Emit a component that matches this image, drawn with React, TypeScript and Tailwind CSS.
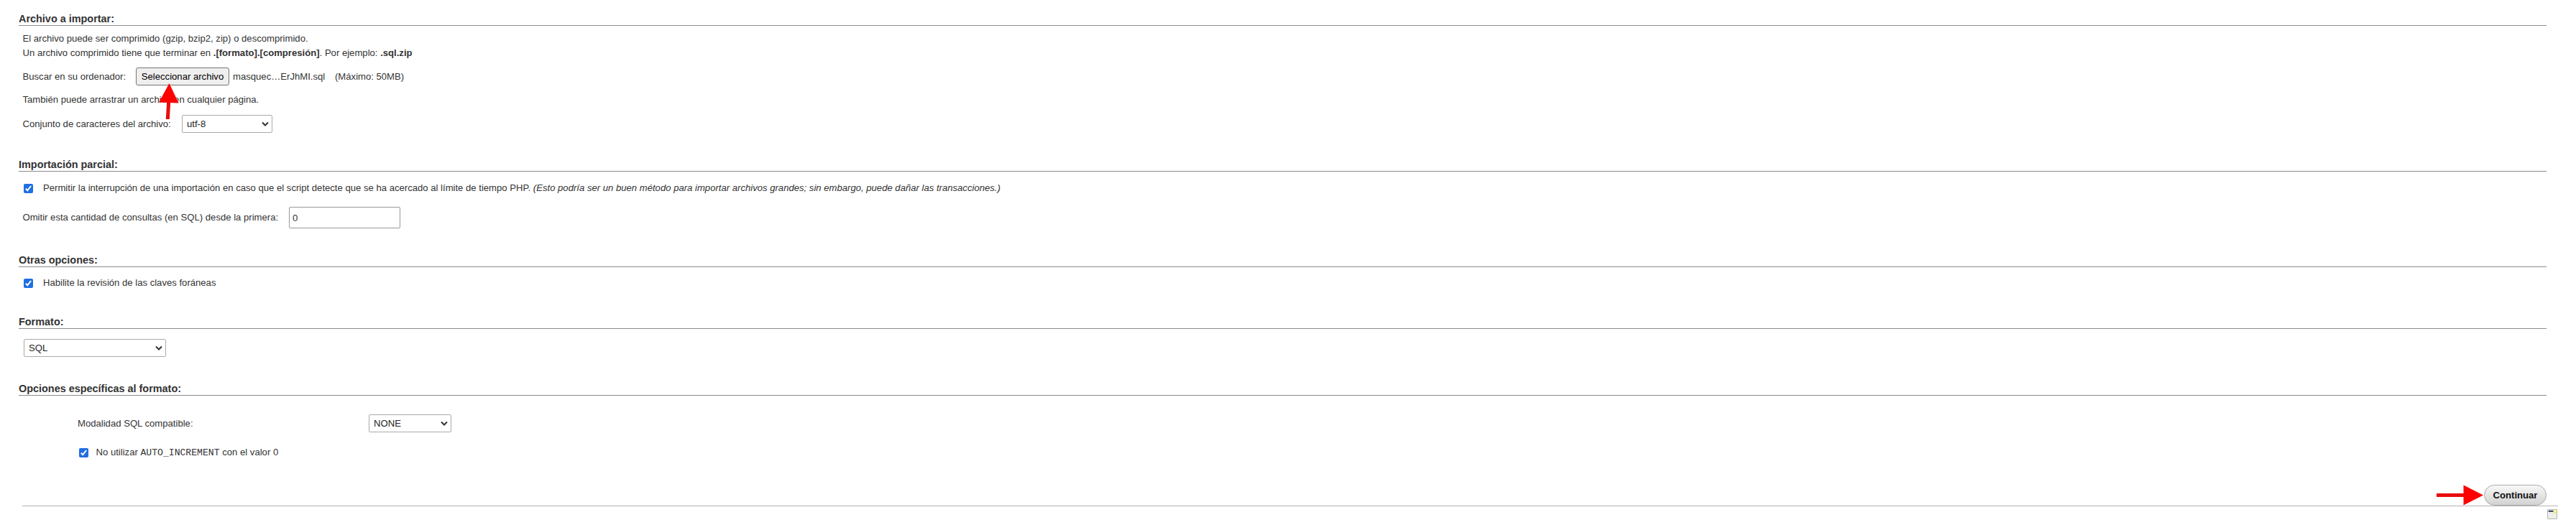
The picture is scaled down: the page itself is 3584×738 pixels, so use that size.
import type { ReactNode } from "react";

function Section({ title, className, children }: { title: string; className: string; children: ReactNode }) {
  return (
    <section className={`ml-[27px] mr-[41px] ${className}`}>
      <h3 className="-ml-px box-content h-[18px] border-b border-[#8c8c8c] text-[14.43px] leading-[18px] font-bold text-[#333]">
        {title}
      </h3>
      {children}
    </section>
  );
}

function Select({ value, className }: { value: string; className: string }) {
  return (
    <button
      type="button"
      className={`flex h-[25px] shrink-0 items-center justify-between rounded-[2px] border border-[#aaa] bg-white pr-[4px] pl-[6px] text-[#222] ${className}`}
    >
      <span>{value}</span>
      <svg width="10" height="8" viewBox="0 0 10 8" fill="none" stroke="#333" strokeWidth="2">
        <path d="M1 1.5 L5 5.5 L9 1.5" />
      </svg>
    </button>
  );
}

function Checkbox() {
  return (
    <span
      role="checkbox"
      aria-checked="true"
      className="mt-px flex size-[13px] shrink-0 items-center justify-center rounded-[2px] bg-[#1f6fe0]"
    >
      <svg width="13" height="13" viewBox="0 0 13 13" fill="none" stroke="#fff" strokeWidth="2">
        <path d="M2.8 6.8 L5.2 9.2 L10.1 3" />
      </svg>
    </span>
  );
}

export default function App() {
  return (
    <main className="relative h-[738px] w-[3584px] overflow-hidden bg-white pt-[17px] font-['Liberation_Sans',Arial,sans-serif] text-[13.12px] leading-[20px] whitespace-nowrap text-[#333]">
      <Section title="Archivo a importar:" className="h-[203px]">
        <div className="pt-[8px] pl-[4.5px]">
          <p>El archivo puede ser comprimido (gzip, bzip2, zip) o descomprimido.</p>
          <p>
            Un archivo comprimido tiene que terminar en <b>.[formato].[compresión]</b>. Por ejemplo: <b>.sql.zip</b>
          </p>
          <div className="mt-[10px] flex h-[25px] items-center">
            <span className="w-[157.5px]">Buscar en su ordenador:</span>
            <button
              type="button"
              className="h-[25px] w-[130px] rounded-[3px] border border-[#767676] bg-[#efefef] text-center leading-[23px] text-black"
            >
              Seleccionar archivo
            </button>
            <span className="ml-[5px] w-[142px]">masquec…ErJhMI.sql</span>
            <span>(Máximo: 50MB)</span>
          </div>
          <p className="mt-[10px]">También puede arrastrar un archivo en cualquier página.</p>
          <div className="mt-[11px] flex h-[25px] items-center">
            <span className="w-[221.5px]">Conjunto de caracteres del archivo:</span>
            <Select value="utf-8" className="w-[126px]" />
          </div>
        </div>
      </Section>

      <Section title="Importación parcial:" className="h-[133px]">
        <div className="mt-[13px] flex h-[20px] items-center gap-[14px] pl-[6px]">
          <Checkbox />
          <span>
            Permitir la interrupción de una importación en caso que el script detecte que se ha acercado al límite de
            tiempo PHP. <i>(Esto podría ser un buen método para importar archivos grandes; sin embargo, puede dañar las transacciones.)</i>
          </span>
        </div>
        <div className="mt-[16px] flex h-[30px] items-center pl-[4.5px]">
          <span className="w-[370.5px]">Omitir esta cantidad de consultas (en SQL) desde la primera:</span>
          <input
            defaultValue="0"
            className="h-[30px] w-[155px] rounded-[2px] border border-[#999] bg-white px-[4px] text-[#333]"
          />
        </div>
      </Section>

      <Section title="Otras opciones:" className="h-[86px]">
        <div className="mt-[12px] flex h-[20px] items-center gap-[14px] pl-[6px]">
          <Checkbox />
          <span>Habilite la revisión de las claves foráneas</span>
        </div>
      </Section>

      <Section title="Formato:" className="h-[93px]">
        <div className="mt-[14px] flex pl-[6px]">
          <Select value="SQL" className="w-[198px]" />
        </div>
      </Section>

      <Section title="Opciones específicas al formato:" className="h-[143px]">
        <div className="mt-[26px] flex h-[25px] items-center pl-[81px]">
          <span className="w-[405px]">Modalidad SQL compatible:</span>
          <Select value="NONE" className="w-[115px]" />
        </div>
        <div className="mt-[18px] flex h-[20px] items-center gap-[10.5px] pl-[83px]">
          <Checkbox />
          <span>
            No utilizar <code className="font-['Liberation_Mono',monospace] text-[13.12px]">AUTO_INCREMENT</code> con el
            valor 0
          </span>
        </div>
      </Section>

      <div className="mr-[41px] flex h-[29px] items-center justify-end">
        <svg width="66" height="29" viewBox="0 0 66 29">
          <path d="M0 12 H38 V17 H0 Z" fill="#e80c0c" />
          <path d="M37.5 0.5 L65 14.5 L37.5 28.5 Z" fill="#fe0000" />
        </svg>
        <button
          type="button"
          className="h-[29px] w-[87px] rounded-full border border-[#aaa] bg-gradient-to-b from-[#f8f8f8] to-[#d2d2d2] text-center leading-[27px] font-bold text-[#111]"
        >
          Continuar
        </button>
      </div>
      <hr className="mr-[25px] ml-[31px] border-[#b4b4b4]" />
      <div className="mt-[4px] mr-[26px] flex justify-end">
        <svg width="14" height="14" viewBox="0 0 14 14">
          <rect x="0.5" y="0.5" width="13" height="13" rx="0.5" fill="#eeeeec" stroke="#b5b5b0" />
          <rect x="1" y="1" width="12" height="3.5" fill="#f8f8f8" />
          <rect x="1.7" y="1.8" width="7" height="2" fill="#203a57" />
          <path d="M11 0 L12 1.7 L14 2 L13 3.8 L13.5 6 L11 5 L9 6 L9 3.8 L8 2 L10 1.7 Z" fill="#ede65a" />
          <circle cx="11" cy="3" r="1.2" fill="#fffbc4" />
        </svg>
      </div>

      <svg className="absolute top-[115px] left-[220px]" width="30" height="52" viewBox="0 0 30 52">
        <path d="M12.2 26 H17.3 L15.8 51 H10.8 Z" fill="#e80c0c" />
        <path d="M15.5 1 L28.5 28.5 L1 27.5 Z" fill="#fe0000" />
      </svg>
    </main>
  );
}
